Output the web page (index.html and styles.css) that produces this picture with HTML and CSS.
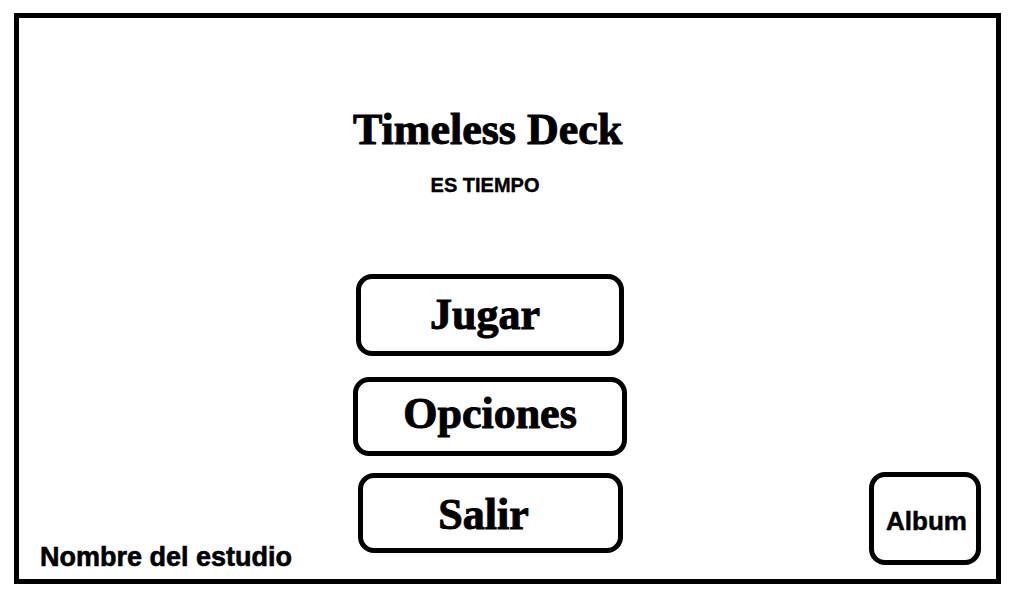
FILE: index.html
```html
<!DOCTYPE html>
<html lang="es">
<head>
<meta charset="utf-8">
<title>Timeless Deck</title>
<link rel="stylesheet" href="styles.css">
</head>
<body>
<div class="frame">
  <h1 class="title">Timeless Deck</h1>
  <p class="subtitle">ES TIEMPO</p>
  <button class="btn btn-jugar">Jugar</button>
  <button class="btn btn-opciones">Opciones</button>
  <button class="btn btn-salir">Salir</button>
  <div class="studio">Nombre del estudio</div>
  <button class="album">Album</button>
</div>
</body>
</html>
```
FILE: styles.css
```css
html, body {
  margin: 0;
  padding: 0;
  background: #fff;
}

.frame {
  box-sizing: border-box;
  width: 987px;
  height: 571px;
  margin: 13px 0 0 14px;
  border: 5px solid #000;
  display: grid;
  grid-template-columns: 334px 274px 1fr;
  grid-template-rows: auto auto auto auto auto 1fr;
  color: #000;
}

.title {
  grid-column: 2;
  grid-row: 1;
  margin: 90px 0 0 0;
  font-family: "Liberation Serif", "Times New Roman", serif;
  font-weight: bold;
  font-size: 44px;
  line-height: 44px;
  text-align: center;
  white-space: nowrap;
  padding-right: 5px;
  -webkit-text-stroke: 1px #000;
}

.subtitle {
  grid-column: 2;
  grid-row: 2;
  margin: 23px 0 0 0;
  font-family: "Liberation Sans", Arial, sans-serif;
  font-weight: bold;
  font-size: 20px;
  line-height: 20px;
  text-align: center;
  padding-right: 10px;
  -webkit-text-stroke: 0.4px #000;
}

.btn {
  grid-column: 2;
  box-sizing: border-box;
  display: flex;
  align-items: center;
  justify-content: center;
  background: #fff;
  border: 5px solid #000;
  border-radius: 16px;
  font-family: "Liberation Serif", "Times New Roman", serif;
  font-weight: bold;
  font-size: 44px;
  line-height: 44px;
  color: #000;
  padding: 0;
  -webkit-text-stroke: 1px #000;
}

.btn-jugar {
  grid-row: 3;
  width: 268px;
  height: 82px;
  margin: 79px 0 0 3px;
  padding: 2px 10px 2px 0;
}

.btn-opciones {
  grid-row: 4;
  width: 274px;
  height: 79px;
  margin: 21px 0 0 0;
  padding: 0 0 5px 0;
}

.btn-salir {
  grid-row: 5;
  width: 265px;
  height: 80px;
  margin: 17px 0 0 5px;
  padding: 3px 14px 0 0;
}

.studio {
  grid-column: 1;
  grid-row: 5 / 7;
  align-self: end;
  margin: 0 0 8px 21px;
  font-family: "Liberation Sans", Arial, sans-serif;
  font-weight: bold;
  font-size: 27px;
  line-height: 27px;
  white-space: nowrap;
  -webkit-text-stroke: 0.6px #000;
}

.album {
  grid-column: 3;
  grid-row: 5 / 7;
  align-self: end;
  justify-self: end;
  box-sizing: border-box;
  width: 112px;
  height: 93px;
  margin: 0 15px 14px 0;
  display: flex;
  align-items: center;
  justify-content: center;
  padding: 5px 0 0 3px;
  background: #fff;
  border: 5px solid #000;
  border-radius: 16px;
  font-family: "Liberation Sans", Arial, sans-serif;
  font-weight: bold;
  font-size: 26px;
  line-height: 26px;
  color: #000;
  -webkit-text-stroke: 0.5px #000;
}
```
